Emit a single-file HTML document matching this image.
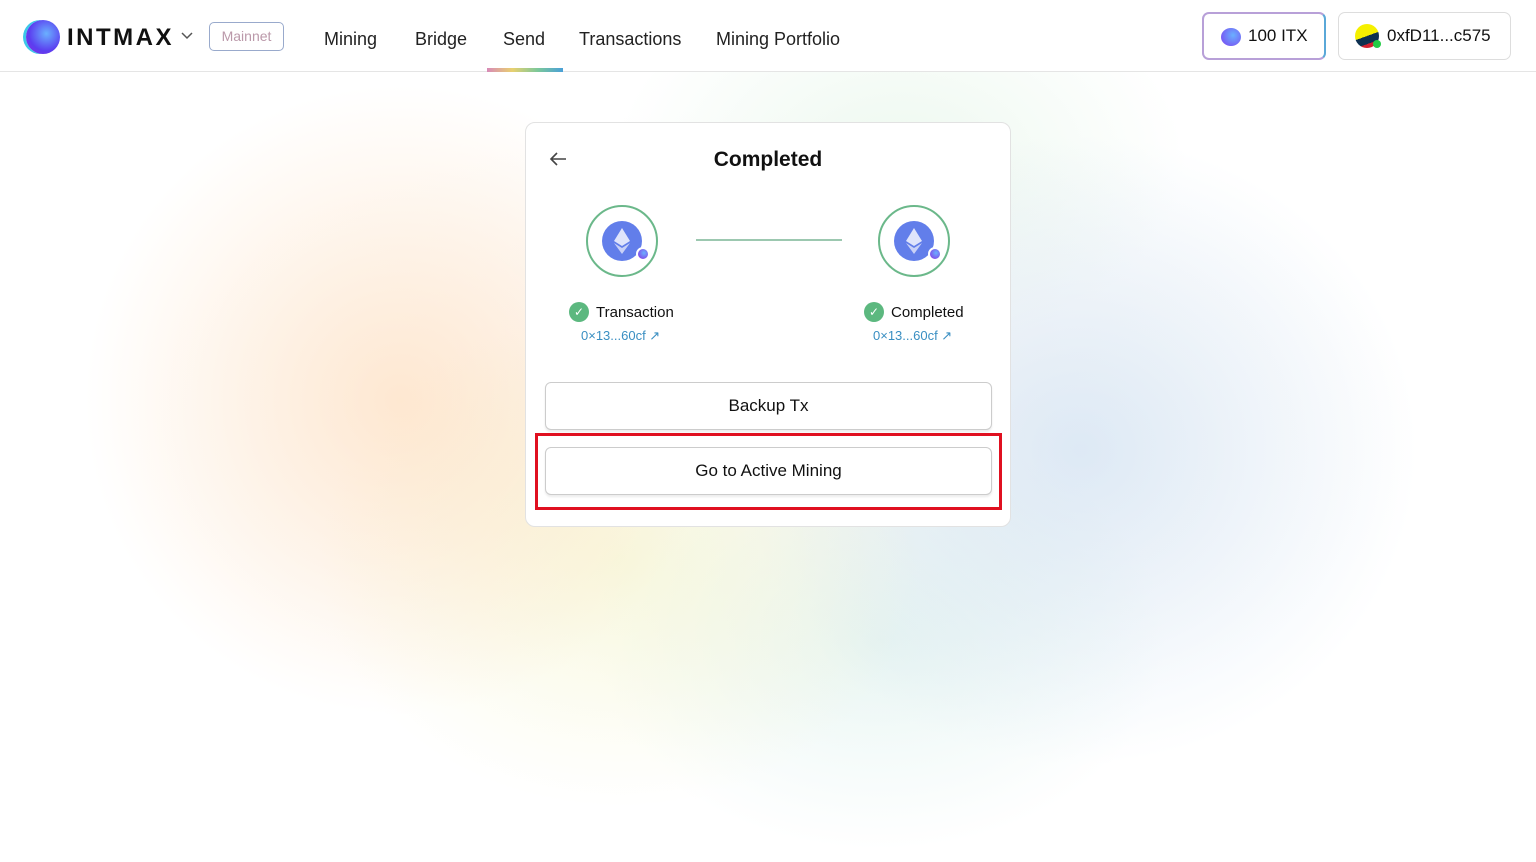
<!DOCTYPE html>
<html><head><meta charset="utf-8"><style>
*{box-sizing:border-box;margin:0;padding:0}
body{width:1536px;height:862px;overflow:hidden;font-family:"Liberation Sans",sans-serif;color:#111;position:relative;background:#fff}
.bg{position:absolute;inset:0;background:
radial-gradient(ellipse 420px 420px at 400px 400px,rgba(255,215,175,.55),transparent 75%),
radial-gradient(ellipse 400px 330px at 620px 560px,rgba(245,245,195,.5),transparent 75%),
radial-gradient(ellipse 450px 420px at 1080px 450px,rgba(190,215,240,.5),transparent 75%),
radial-gradient(ellipse 380px 250px at 900px 160px,rgba(215,240,220,.45),transparent 75%),
radial-gradient(ellipse 380px 280px at 880px 640px,rgba(205,235,230,.45),transparent 75%),
radial-gradient(ellipse 760px 380px at 768px 430px,rgba(245,240,235,.5),transparent 85%);}
.hdr{position:absolute;top:0;left:0;right:0;height:72px;border-bottom:1px solid #e5e5e5;background:#fff}
.nav{position:absolute;top:29px;font-size:18px;color:#222}
.card{position:absolute;left:525px;top:122px;width:486px;height:405px;background:#fff;border:1px solid #e2e2e2;border-radius:10px}
.btn{position:absolute;left:19px;width:447px;height:48px;border:1px solid #ccc;border-radius:6px;background:#fff;font-size:17px;text-align:center;line-height:46px;box-shadow:0 2px 2px rgba(0,0,0,.08)}
.node{position:absolute;top:82px;width:72px;height:72px;border:2px solid #6bb88a;border-radius:50%}
.lbl{position:absolute;top:179px;font-size:15px;display:flex;align-items:center;gap:7px}
.chk{width:20px;height:20px;border-radius:50%;background:#5cb87f;color:#fff;font-size:12px;text-align:center;line-height:20px}
.hash{position:absolute;top:205px;font-size:13px;color:#3a8fc2}
.eth{position:absolute;left:14px;top:14px;width:40px;height:40px;border-radius:50%;background:#627eea}
.mini{position:absolute;left:48px;top:40px;width:14px;height:14px;border-radius:50%;background:radial-gradient(circle at 60% 40%,#6ab0ff,#8a2be2);border:2px solid #fff}
</style></head><body>
<div class="bg"></div>
<div class="hdr">
 <div style="position:absolute;left:26px;top:20px;width:34px;height:34px;border-radius:50%;background:radial-gradient(circle at 60% 40%,#6ab0ff,#5b3ef0 60%,#8a2be2);box-shadow:-3px 0 0 #3cc8e8"></div>
 <div style="position:absolute;left:67px;top:24px;font-size:24px;font-weight:bold;letter-spacing:2.5px">INTMAX</div>
 <svg style="position:absolute;left:181px;top:32px" width="12" height="8" viewBox="0 0 12 8"><path d="M1 1l5 5 5-5" fill="none" stroke="#555" stroke-width="1.5"/></svg>
 <div style="position:absolute;left:209px;top:22px;width:75px;height:29px;border:1.5px solid #9ac;border-radius:5px;font-size:14px;color:#b9a;text-align:center;line-height:26px">Mainnet</div>
 <div class="nav" style="left:324px">Mining</div>
 <div class="nav" style="left:415px">Bridge</div>
 <div class="nav" style="left:503px">Send</div>
 <div class="nav" style="left:579px">Transactions</div>
 <div class="nav" style="left:716px">Mining Portfolio</div>
 <div style="position:absolute;left:487px;top:68px;width:76px;height:4px;background:linear-gradient(90deg,#d88ab8,#e8d070,#7cc89a,#4aa0d8)"></div>
 <div style="position:absolute;left:1202px;top:12px;width:124px;height:48px;border:2px solid #b8a0d8;border-right-color:#5aa8d8;border-radius:7px;font-size:17px;line-height:44px;padding-left:44px">100 ITX</div>
 <div style="position:absolute;left:1221px;top:28px;width:20px;height:18px;border-radius:50%;background:radial-gradient(circle at 60% 40%,#6ab0ff,#7a3ef0)"></div>
 <div style="position:absolute;left:1338px;top:12px;width:173px;height:48px;border:1px solid #ddd;border-radius:7px;font-size:17px;line-height:46px;padding-left:48px">0xfD11...c575</div>
 <div style="position:absolute;left:1355px;top:24px;width:24px;height:24px;border-radius:50%;background:linear-gradient(160deg,#f5f000 50%,#0d3050 50%,#0d3050 75%,#d02030 75%)"></div>
 <div style="position:absolute;left:1373px;top:40px;width:8px;height:8px;border-radius:50%;background:#2c4"></div>
</div>
<div class="card">
 <svg style="position:absolute;left:22px;top:28px" width="20" height="16" viewBox="0 0 20 16"><path d="M18 8H3M9 2L3 8l6 6" fill="none" stroke="#444" stroke-width="1.6"/></svg>
 <div style="position:absolute;left:0;right:0;top:25px;text-align:center;font-size:21px;font-weight:bold">Completed</div>
 <div class="node" style="left:60px"><div class="eth"><svg width="40" height="40" viewBox="0 0 40 40"><path d="M20 7l-8 13 8 5 8-5z" fill="#dfe4fb"/><path d="M20 27l-8-5 8 11 8-11z" fill="#c9d1f7"/></svg></div><div class="mini"></div></div>
 <div class="node" style="left:352px"><div class="eth"><svg width="40" height="40" viewBox="0 0 40 40"><path d="M20 7l-8 13 8 5 8-5z" fill="#dfe4fb"/><path d="M20 27l-8-5 8 11 8-11z" fill="#c9d1f7"/></svg></div><div class="mini"></div></div>
 <div style="position:absolute;left:170px;top:116px;width:146px;height:2px;background:#9cc8b0"></div>
 <div class="lbl" style="left:43px"><span class="chk">✓</span>Transaction</div>
 <div class="lbl" style="left:338px"><span class="chk">✓</span>Completed</div>
 <div class="hash" style="left:55px">0×13...60cf ↗</div>
 <div class="hash" style="left:347px">0×13...60cf ↗</div>
 <div class="btn" style="top:259px">Backup Tx</div>
 <div class="btn" style="top:324px">Go to Active Mining</div>
 <div style="position:absolute;left:9px;top:310px;width:467px;height:77px;border:3px solid #e01020"></div>
</div>
</body></html>
